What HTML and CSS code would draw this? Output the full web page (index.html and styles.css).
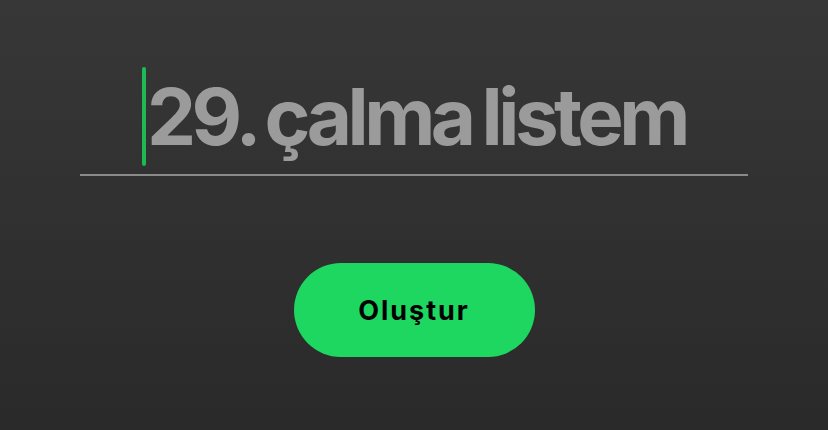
FILE: index.html
```html
<!DOCTYPE html>
<html>
<head>
    <meta charset="utf-8">
    <link rel="stylesheet" href="styles.css">
</head>
<body>
    <div class="page">
        <div class="nameField">
            <span class="caret"></span>
            <span class="playlistName">29. çalma listem</span>
        </div>
        <button class="createBtn">Oluştur</button>
    </div>
</body>
</html>
```
FILE: styles.css
```css
html, body {
    margin: 0;
    height: 100%;
}
body {
    background: linear-gradient(#373737, #2a2a2a);
    font-family: Inter, "Liberation Sans", sans-serif;
}
.page {
    display: flex;
    flex-direction: column;
    align-items: center;
}
.nameField {
    align-self: stretch;
    margin: 0 80px;
    padding: 67px 0 8px;
    border-bottom: 2px solid #8a8a8a;
    display: flex;
    justify-content: center;
    align-items: center;
}
.caret {
    width: 4px;
    height: 99px;
    border-radius: 2px;
    background-color: #1db954;
    margin-right: 1px;
}
.playlistName {
    font-size: 78px;
    font-weight: 700;
    letter-spacing: -4.5px;
    word-spacing: -4px;
    color: #9b9b9b;
    line-height: 1;
}
.createBtn {
    margin-top: 87px;
    width: 241px;
    height: 94px;
    border: none;
    border-radius: 47px;
    background-color: #1ed760;
    color: #000;
    font-family: Inter, "Liberation Sans", sans-serif;
    font-size: 27px;
    font-weight: 700;
    letter-spacing: 2px;
}
```
